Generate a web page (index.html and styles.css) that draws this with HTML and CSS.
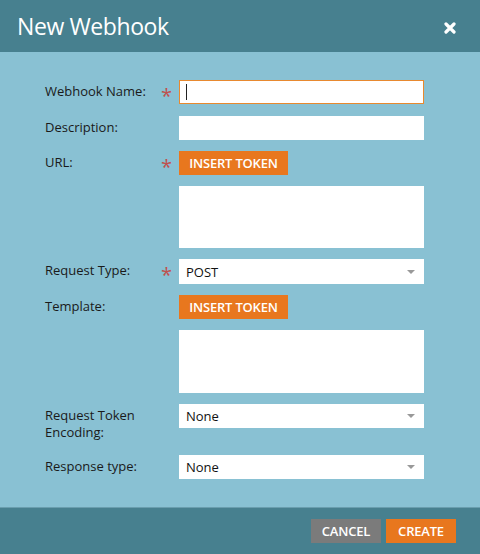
FILE: index.html
```html
<!DOCTYPE html>
<html>
<head>
<meta charset="utf-8">
<link rel="stylesheet" href="styles.css">
</head>
<body>
<div class="dialog">
  <div class="header">
    <div class="title">New Webhook</div>
    <svg class="close" width="12" height="12" viewBox="0 0 12 12"><path d="M2 2 L10 10 M10 2 L2 10" stroke="#fff" stroke-width="3.2" stroke-linecap="round"/></svg>
  </div>
  <div class="body">
    <div class="row">
      <div class="label">Webhook Name:</div>
      <div class="req">*</div>
      <div class="field"><div class="input focus"><span class="caret"></span></div></div>
    </div>
    <div class="row r2">
      <div class="label">Description:</div>
      <div class="req"></div>
      <div class="field"><div class="input"></div></div>
    </div>
    <div class="row">
      <div class="label">URL:</div>
      <div class="req">*</div>
      <div class="field col">
        <div class="btn orange token">INSERT TOKEN</div>
        <div class="textarea"></div>
      </div>
    </div>
    <div class="row">
      <div class="label">Request Type:</div>
      <div class="req">*</div>
      <div class="field"><div class="select sel25"><span>POST</span><span class="arrow"></span></div></div>
    </div>
    <div class="row">
      <div class="label">Template:</div>
      <div class="req"></div>
      <div class="field col">
        <div class="btn orange token">INSERT TOKEN</div>
        <div class="textarea ta63"></div>
      </div>
    </div>
    <div class="row">
      <div class="label two">Request Token<br>Encoding:</div>
      <div class="req"></div>
      <div class="field"><div class="select"><span>None</span><span class="arrow"></span></div></div>
    </div>
    <div class="row">
      <div class="label">Response type:</div>
      <div class="req"></div>
      <div class="field"><div class="select"><span>None</span><span class="arrow"></span></div></div>
    </div>
  </div>
  <div class="footer">
    <div class="btn gray">CANCEL</div>
    <div class="btn orange">CREATE</div>
  </div>
</div>
</body>
</html>
```

FILE: styles.css
```css
html, body {
  margin: 0;
  padding: 0;
}
body {
  width: 480px;
  height: 554px;
  font-family: "Open Sans", "DejaVu Sans", sans-serif;
  background: #89c1d3;
}
.dialog {
  display: flex;
  flex-direction: column;
  height: 554px;
}
.header {
  height: 52px;
  background: #47808f;
  display: flex;
  align-items: center;
  justify-content: space-between;
  padding: 0 24px 0 17px;
  flex-shrink: 0;
}
.title {
  color: #fff;
  font-size: 23px;
  font-weight: 500;
  letter-spacing: -0.4px;
  line-height: 28px;
  margin-top: -1px;
}
.close {
  display: block;
  margin-top: 4px;
}
.body {
  flex: 1;
  padding: 28px 56px 0 45px;
  display: flex;
  flex-direction: column;
  gap: 11px;
}
.row {
  display: flex;
  align-items: flex-start;
}
.r2 {
  margin-top: 1px;
}
.label {
  width: 116px;
  font-size: 13px;
  line-height: 17px;
  color: #1a1a1a;
  padding-top: 3px;
}
.label.two {
  padding-bottom: 3px;
}
.req {
  width: 18px;
  color: #c0504d;
  font-size: 20px;
  line-height: 24px;
  height: 24px;
  padding-top: 4px;
  box-sizing: border-box;
  text-align: left;
}
.field {
  width: 245px;
}
.col {
  display: flex;
  flex-direction: column;
  gap: 11px;
}
.input {
  height: 24px;
  background: #fff;
  box-sizing: border-box;
  display: flex;
  align-items: center;
}
.input.focus {
  border: 1px solid #e8892f;
  padding-left: 6px;
}
.caret {
  display: block;
  width: 1px;
  height: 16px;
  background: #222;
}
.textarea {
  height: 62px;
  background: #fff;
}
.ta63 {
  height: 63px;
}
.select {
  height: 24px;
  background: #fff;
  display: flex;
  align-items: center;
  justify-content: space-between;
  padding: 0 9px 0 7px;
  font-size: 13px;
  color: #111;
}
.sel25 {
  height: 25px;
}
.arrow {
  width: 0;
  height: 0;
  border-left: 4px solid transparent;
  border-right: 4px solid transparent;
  border-top: 4px solid #999;
}
.btn {
  height: 24px;
  line-height: 24px;
  color: #fff;
  font-size: 13px;
  font-weight: 600;
  text-align: center;
  letter-spacing: -0.2px;
}
.orange {
  background: #e8771e;
}
.gray {
  background: #7b7b7b;
}
.token {
  width: 109px;
}
.footer {
  height: 47px;
  background: #47808f;
  border-top: 1px solid #6a9eae;
  box-sizing: border-box;
  display: flex;
  justify-content: flex-end;
  padding: 11px 24px 0 0;
  gap: 5px;
  flex-shrink: 0;
}
.footer .btn {
  width: 70px;
}
```
